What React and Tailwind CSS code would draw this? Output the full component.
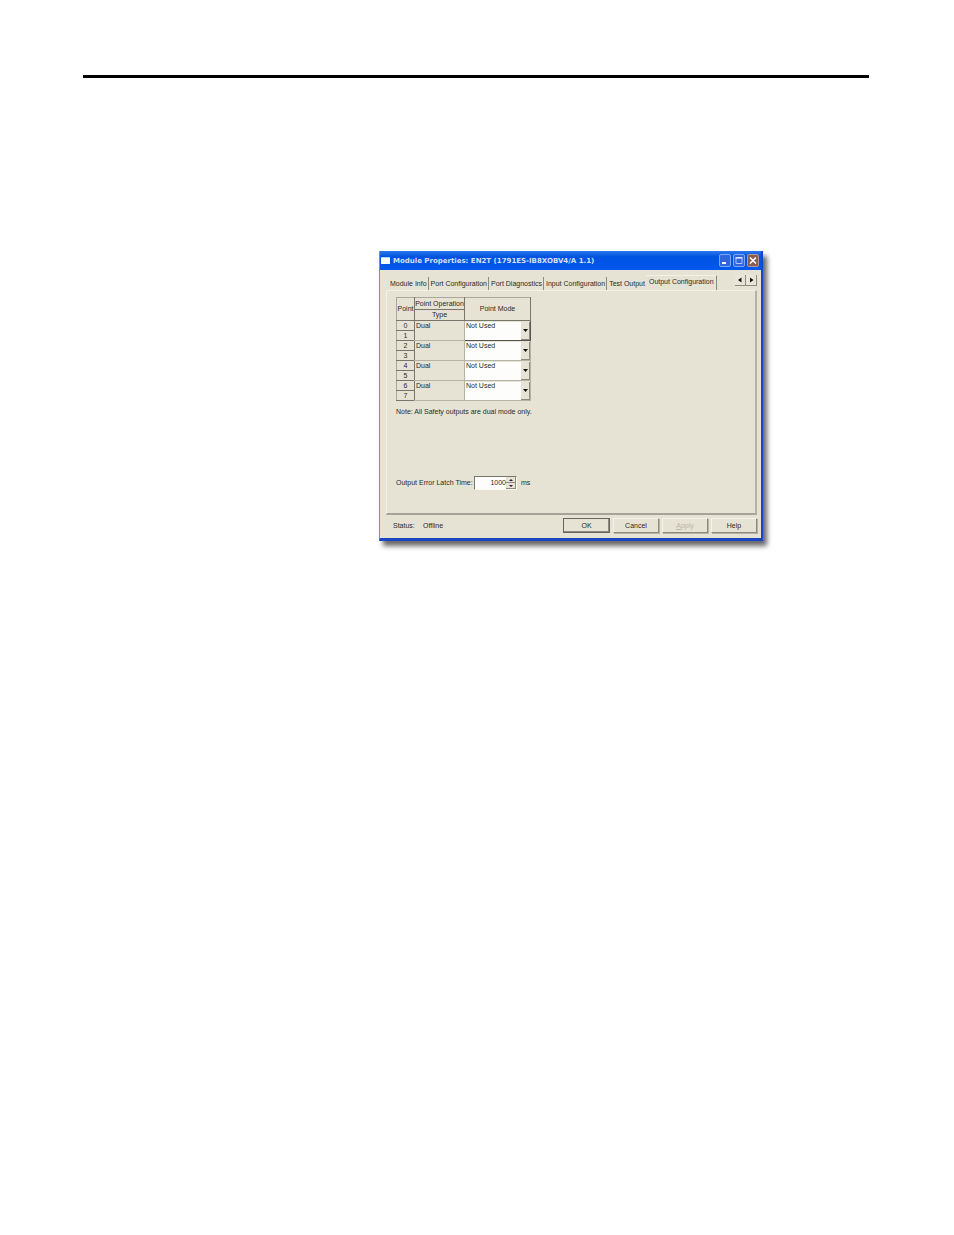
import { useState } from "react";

const tabs = [
  "Module Info",
  "Port Configuration",
  "Port Diagnostics",
  "Input Configuration",
  "Test Output",
];

const pairs = [0, 2, 4, 6];

const headCell =
  "border-r border-b border-[#77756c] border-t border-t-[#aaa89d] p-0 text-center font-normal";

function TitleBar() {
  return (
    <header className="flex h-[19px] items-center bg-linear-to-b from-[#2a78ee] via-[#0053e1] via-30% to-[#0058ee] pr-[2px] pl-px">
      <span className="h-[7px] w-[9px] border-t border-[#b9cff5] bg-white"></span>
      <h1 className="ml-[3px] flex-1 font-['DejaVu_Sans',sans-serif] leading-[10px] font-bold text-[#d3e0f8]">
        Module Properties: EN2T (1791ES-IB8XOBV4/A 1.1)
      </h1>
      <div className="flex gap-[2px]">
        <button
          aria-label="Minimize"
          className="h-[13px] w-3 rounded-xs border border-[#7da7f0] bg-[#2f66dc]"
        >
          <svg viewBox="0 0 10 11" className="block h-full w-full">
            <path d="M2 7h4v2H2z" fill="#fff" />
          </svg>
        </button>
        <button
          aria-label="Maximize"
          className="h-[13px] w-3 rounded-xs border border-[#7da7f0] bg-[#2f66dc]"
        >
          <svg viewBox="0 0 10 11" className="block h-full w-full">
            <path d="M2 3h6v5.500H2z" fill="none" stroke="#a9c4f6" />
            <path d="M1.500 2h7v1.500h-7z" fill="#d6e3fb" />
          </svg>
        </button>
        <button
          aria-label="Close"
          className="h-[13px] w-3 rounded-xs border border-[#b09a9f] bg-[#8d5d50]"
        >
          <svg viewBox="0 0 10 11" className="block h-full w-full">
            <path d="M2 2.500l6 6M8 2.500l-6 6" stroke="#fff" strokeWidth="1.600" />
          </svg>
        </button>
      </div>
    </header>
  );
}

function TabRow() {
  return (
    <nav className="flex h-[15px] items-end pl-[2px]">
      {tabs.map((tab, index) => (
        <button
          key={tab}
          className={`h-[13px] pl-[2px] whitespace-nowrap ${
            index === tabs.length - 1
              ? "pr-px"
              : "border-r border-[#8d8b80] pr-px"
          }`}
        >
          {tab}
        </button>
      ))}
      <button className="h-[15px] border-t border-r border-t-[#f3f1e7] border-r-[#8d8b80] pr-[2px] pb-[2px] pl-[3px] whitespace-nowrap">
        Output Configuration
      </button>
      <div className="ml-auto flex self-start">
        <button
          aria-label="Scroll tabs left"
          className="h-[11px] w-[11px] border-r border-b border-[#8d8b80] bg-[#e9e6d8]"
        >
          <svg viewBox="0 0 10 10" className="block h-full w-full">
            <path d="M6.500 2.500v5L3 5z" fill="#111" />
          </svg>
        </button>
        <button
          aria-label="Scroll tabs right"
          className="h-[11px] w-[11px] border-r border-b border-[#8d8b80] bg-[#e9e6d8]"
        >
          <svg viewBox="0 0 10 10" className="block h-full w-full">
            <path d="M4 2.500v5L7.500 5z" fill="#111" />
          </svg>
        </button>
      </div>
    </nav>
  );
}

function PointLabel({ value }) {
  return (
    <th
      scope="row"
      className="h-[10px] border-r border-b border-l border-[#77756c] border-l-[#aaa89d] p-0 text-center leading-[9px] font-normal"
    >
      {value}
    </th>
  );
}

function ModeCell({ point }) {
  const focused = point === 0;
  return (
    <td
      rowSpan={2}
      className={`p-0 ${
        focused
          ? "border border-[#55534d]"
          : "border-r border-b border-[#b5b3a7]"
      }`}
    >
      <div className="flex h-[18px]">
        <select
          aria-label={`Point ${point} mode`}
          className="min-w-0 flex-1 appearance-none bg-[#fdfdfb] pb-[10px] pl-px leading-[8px] outline-none"
        >
          <option>Not Used</option>
        </select>
        <span className="flex w-[9px] items-center justify-center border-r border-b border-[#8d8b80] bg-[#e6e3d5]">
          <svg viewBox="0 0 5 3" className="h-[3px] w-[5px]">
            <path d="M0 0h5L2.500 3z" fill="#111" />
          </svg>
        </span>
      </div>
    </td>
  );
}

function PointTable() {
  return (
    <table className="w-[135px] table-fixed border-collapse border border-[#aaa89d]">
      <colgroup>
        <col className="w-[18px]" />
        <col className="w-[50px]" />
        <col />
      </colgroup>
      <thead>
        <tr className="h-3">
          <th rowSpan={2} className={headCell}>
            Point
          </th>
          <th className={`${headCell} whitespace-nowrap`}>Point Operation</th>
          <th rowSpan={2} className={headCell}>
            Point Mode
          </th>
        </tr>
        <tr className="h-[11px]">
          <th className={headCell}>Type</th>
        </tr>
      </thead>
      {pairs.map((point) => (
        <tbody key={point}>
          <tr>
            <PointLabel value={point} />
            <td
              rowSpan={2}
              className="border-r border-b border-[#b5b3a7] p-0 pl-px align-top leading-[9px]"
            >
              Dual
            </td>
            <ModeCell point={point} />
          </tr>
          <tr>
            <PointLabel value={point + 1} />
          </tr>
        </tbody>
      ))}
    </table>
  );
}

function LatchTime() {
  const [time, setTime] = useState(1000);

  return (
    <div className="mt-[59px] flex items-center">
      <label htmlFor="latch" className="w-[78px] whitespace-nowrap">
        Output Error Latch Time:
      </label>
      <div className="flex h-[14px] w-[43px] border border-[#fbfaf3] border-t-[#77756c] border-l-[#77756c] bg-[#fdfdfb]">
        <input
          id="latch"
          value={time}
          onChange={(e) => setTime(Number(e.target.value) || 0)}
          className="min-w-0 flex-1 text-right outline-none"
        />
        <div className="flex w-[10px] flex-col">
          <button
            aria-label="Increase"
            onClick={() => setTime(time + 1)}
            className="flex flex-1 items-center justify-center border-r border-b border-[#8d8b80] bg-[#e6e3d5]"
          >
            <svg viewBox="0 0 4 2" className="h-[2px] w-1">
              <path d="M0 2h4L2 0z" fill="#222" />
            </svg>
          </button>
          <button
            aria-label="Decrease"
            onClick={() => setTime(time - 1)}
            className="flex flex-1 items-center justify-center border-r border-b border-[#8d8b80] bg-[#e6e3d5]"
          >
            <svg viewBox="0 0 4 2" className="h-[2px] w-1">
              <path d="M0 0h4L2 2z" fill="#222" />
            </svg>
          </button>
        </div>
      </div>
      <span className="ml-1">ms</span>
    </div>
  );
}

function FooterBar() {
  const button =
    "h-[15px] w-[46px] border border-[#f6f4ea] border-r-[#8d8b80] border-b-[#8d8b80] shadow-[1px_1px_0_#b5b3a7]";
  return (
    <footer className="flex items-center pt-[3px] pb-[5px] pl-[7px]">
      <span className="w-[30px]">Status:</span>
      <span>Offline</span>
      <div className="ml-auto flex gap-[3px]">
        <button className="h-[15px] w-[47px] border border-[#66645d] shadow-[inset_-1px_-1px_0_#8d8b80]">
          OK
        </button>
        <button className={button}>Cancel</button>
        <button disabled className={`${button} text-[#b9b6a8]`}>
          <u>A</u>pply
        </button>
        <button className={button}>Help</button>
      </div>
    </footer>
  );
}

function PropertiesWindow() {
  return (
    <section className="border-r-2 border-b-[3px] border-l border-[#1a46c4] border-l-[#7c8fc0] bg-[#e6e3d5] shadow-[4px_5px_5px_0_rgba(0,0,0,0.6)]">
      <TitleBar />
      <div className="pt-[5px] pr-1 pl-[6px]">
        <TabRow />
        <div className="border-t border-r-2 border-b-2 border-l border-[#f3f1e7] border-r-[#b5b3a7] border-b-[#a5a397] pt-[6px] pb-[23px] pl-[9px]">
          <PointTable />
          <p className="mt-[6px]">
            Note: All Safety outputs are dual mode only.
          </p>
          <LatchTime />
        </div>
        <FooterBar />
      </div>
    </section>
  );
}

function App() {
  return (
    <main className="min-h-screen bg-white pt-[75px] pr-[85px] pl-[83px] font-['Liberation_Sans',sans-serif] text-[7px] leading-[10px] text-[#2b2a26]">
      <hr className="h-[3px] border-0 bg-black" />
      <div className="mt-[173px] mr-[106px] ml-[296px]">
        <PropertiesWindow />
      </div>
    </main>
  );
}

export default App;
